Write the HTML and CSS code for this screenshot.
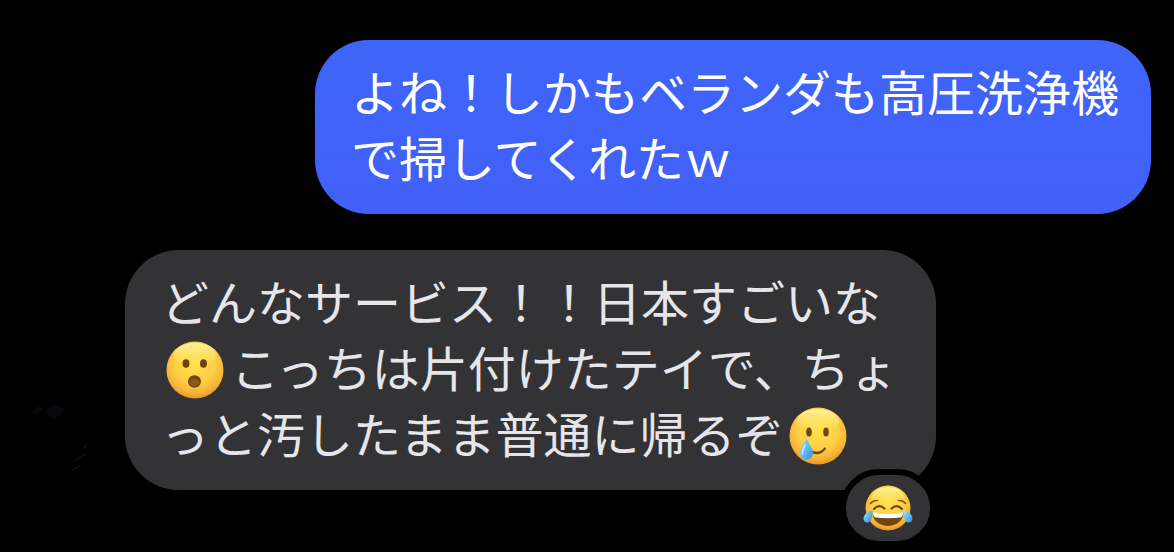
FILE: index.html
```html
<!DOCTYPE html>
<html lang="ja">
<head>
  <meta charset="UTF-8">
  <meta name="viewport" content="width=device-width, initial-scale=1.0">
  <title>チャット</title>
  <link rel="stylesheet" href="styles.css">
</head>
<body>
  <!-- shared emoji colours -->
  <svg class="defs" width="0" height="0" aria-hidden="true">
    <defs>
      <radialGradient id="face" cx="50%" cy="38%" r="64%">
        <stop offset="0" stop-color="#ffe14f"/>
        <stop offset="0.55" stop-color="#fdd044"/>
        <stop offset="0.82" stop-color="#f7b238"/>
        <stop offset="1" stop-color="#e58e26"/>
      </radialGradient>
      <linearGradient id="shine" x1="0" y1="0" x2="0" y2="1">
        <stop offset="0" stop-color="#fff6a8" stop-opacity="0.9"/>
        <stop offset="1" stop-color="#ffe75e" stop-opacity="0"/>
      </linearGradient>
      <linearGradient id="tear" x1="0" y1="0" x2="1" y2="1">
        <stop offset="0" stop-color="#a9e2fb"/>
        <stop offset="0.5" stop-color="#5dbdf3"/>
        <stop offset="1" stop-color="#2b8edb"/>
      </linearGradient>
    </defs>
  </svg>

  <main class="chat">
    <div class="row sent">
      <p class="bubble">よね！しかもベランダも高圧洗浄機<br>で掃してくれたｗ</p>
    </div>

    <div class="row received">
      <div class="avatar">
        <svg viewBox="0 0 64 70" aria-hidden="true">
          <path d="M2 9l8-5 4 3-7 6zM18 7l9-4 8 4-4 7-7 3-6-4z" fill="#06080b"/>
          <path d="M46 59l12-8M43 69l8-6M54 47l4-5" stroke="#171717" stroke-width="1" fill="none"/>
        </svg>
      </div>
      <div class="bubble">
        <p>どんなサービス！！日本すごいな<br><svg class="emoji" viewBox="0 0 58 58" role="img" aria-label="😮">
            <circle cx="29" cy="29" r="28.500" fill="url(#face)"/>
            <ellipse cx="29" cy="14" rx="21" ry="12" fill="url(#shine)"/>
            <ellipse cx="20" cy="22.500" rx="3.500" ry="4.300" fill="#6e4510"/>
            <ellipse cx="37.500" cy="22.500" rx="3.500" ry="4.300" fill="#6e4510"/>
            <ellipse cx="28.500" cy="40.500" rx="6.500" ry="6.200" fill="#714711"/>
            <ellipse cx="28.500" cy="41.500" rx="4.500" ry="4" fill="#8a5a1b"/>
          </svg>こっちは片付けたテイで、ちょ<br>っと汚したまま普通に帰るぞ<svg class="emoji" viewBox="0 0 58 58" role="img" aria-label="🥲">
            <circle cx="29" cy="29" r="28.500" fill="url(#face)"/>
            <ellipse cx="29" cy="14" rx="21" ry="12" fill="url(#shine)"/>
            <ellipse cx="20" cy="25" rx="2.800" ry="4.500" fill="#704511"/>
            <ellipse cx="37" cy="25" rx="2.800" ry="4.500" fill="#704511"/>
            <path d="M21 44Q30 49 36 41.500" fill="none" stroke="#704511" stroke-width="2.200" stroke-linecap="round"/>
            <path d="M17.500 31C15 37 11 41 11 46a6.500 6.500 0 0 0 13 0C24 41 19.500 37 17.500 31z" fill="url(#tear)"/>
            <path d="M16 38c-2 4-3 6-2.500 9" fill="none" stroke="#c9effd" stroke-width="1.500" stroke-linecap="round"/>
          </svg></p>
        <button class="reaction" type="button" aria-label="リアクション 😂">
          <svg viewBox="0 0 50 46" aria-hidden="true">
            <circle cx="25" cy="23" r="22.500" fill="url(#face)"/>
            <ellipse cx="25" cy="11" rx="16" ry="9" fill="url(#shine)"/>
            <path d="M7.500 18.500Q10 15 14.500 15.500M42.500 18.500Q40 15 35.500 15.500" fill="none" stroke="#8a5716" stroke-width="1.600" stroke-linecap="round"/>
            <path d="M11 24Q16 18.500 21.500 23.500M28.500 23.500Q34 18.500 39 24" fill="none" stroke="#704511" stroke-width="2.200" stroke-linecap="round"/>
            <path d="M9.500 28Q25 30 40.500 28C40 36 33 41 25 41S10 36 9.500 28z" fill="#764514"/>
            <path d="M10 27.500Q25 30 40 27.500Q40 31.500 37.500 32.500Q25 34 12.500 32.500Q10 31.500 10 27.500z" fill="#fff"/>
            <path d="M9.500 25C5 26.500 1 29 0.500 33c-.3 3 2 5 4.500 4.500C9 36.500 9.500 30 9.500 25z" fill="url(#tear)"/>
            <path d="M40.500 25C45 26.500 49 29 49.500 33c.3 3-2 5-4.500 4.500C41 36.500 40.500 30 40.500 25z" fill="url(#tear)"/>
          </svg>
        </button>
      </div>
    </div>
  </main>
</body>
</html>
```

FILE: styles.css
```css
* {
  box-sizing: border-box;
  margin: 0;
  padding: 0;
}

body {
  background-color: #000;
  font-family: "Noto Sans CJK JP", sans-serif;
  font-size: 48px;
  line-height: 66px;
}

.defs {
  display: block;
}

.chat {
  display: flex;
  flex-direction: column;
  gap: 36px;
  min-height: 100vh;
  padding: 40px 23px 62px 29px;
}

.row {
  display: flex;
}

.sent {
  justify-content: flex-end;
}

.received {
  gap: 32px;
}

.bubble {
  position: relative;
  padding: 17px 32px 25px 36px;
  border-radius: 54px;
  white-space: nowrap;
}

.sent .bubble {
  background: linear-gradient(#3e65f8, #4260f8);
  color: #fff;
}

.received .bubble {
  padding-right: 38px;
  background-color: #333335;
  color: #e5e5ea;
}

.avatar {
  align-self: flex-end;
  width: 64px;
  margin-bottom: 18px;
}

.avatar svg {
  display: block;
  width: 100%;
}

.emoji {
  width: 58px;
  height: 58px;
  margin: 0 7px 0 5px;
  vertical-align: -12px;
}

/* sits over the bubble's bottom corner */
.reaction {
  position: absolute;
  right: 0;
  bottom: -57px;
  display: flex;
  align-items: center;
  justify-content: center;
  width: 96px;
  height: 78px;
  border: 6px solid #000;
  border-radius: 40px;
  background-color: #333335;
  cursor: pointer;
}

.reaction svg {
  width: 50px;
  height: 46px;
}
```
